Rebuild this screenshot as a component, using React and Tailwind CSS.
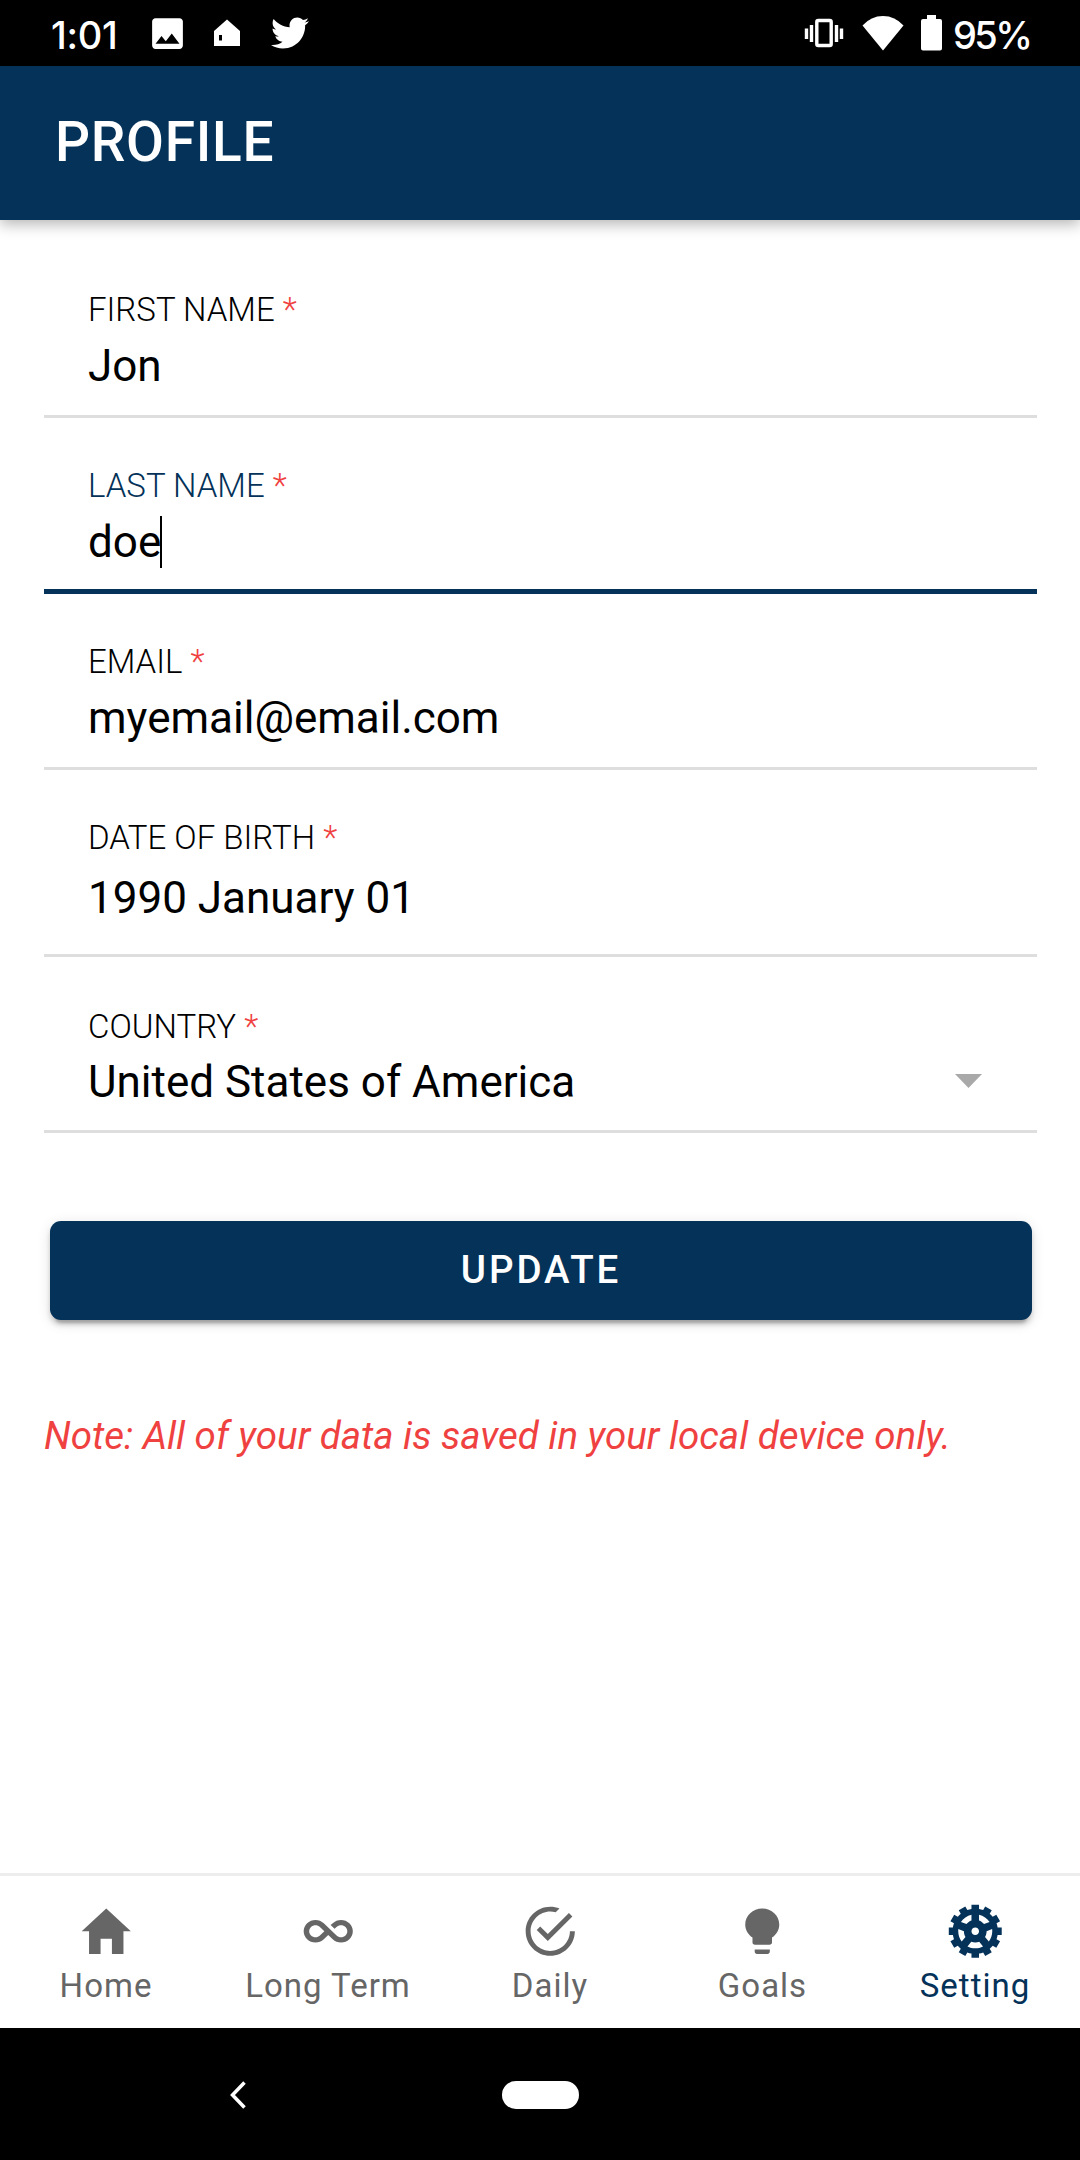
import React from "react";
import { IoMdHome, IoMdInfinite, IoMdCheckmarkCircleOutline, IoMdBulb, IoMdCog } from "react-icons/io";
import { FaTwitter } from "react-icons/fa";
import { MdImage } from "react-icons/md";

function StatusBar() {
  return (
    <div className="flex h-[66px] items-center justify-between bg-black pl-[51px] pr-[51px] text-white">
      <div className="flex items-center">
        <span className="w-[96px] font-['Inter',sans-serif] text-[38px] font-medium leading-[66px] tracking-[-0.3px] pt-[3px]">1:01</span>
        <MdImage className="h-[41px] w-[41px]" />
        <svg className="ml-[25px] h-[28px] w-[28px]" viewBox="0 0 28 28" fill="currentColor">
          <path fillRule="evenodd" d="M14 0.5 27 12V27H1V12ZM6 16V21.5H9V16Z" />
        </svg>
        <FaTwitter className="ml-[30px] h-[38px] w-[38px]" />
      </div>
      <div className="flex items-center">
        <svg className="h-[30px] w-[40px]" viewBox="0 0 40 30" fill="none" stroke="currentColor">
          <rect x="12.8" y="2.5" width="14.4" height="25" rx="1.5" strokeWidth="3.4" />
          <path d="M7.500 7V24M32.500 7V24M2.500 10.500V21M37.500 10.500V21" strokeWidth="3.4" />
        </svg>
        <svg className="ml-[18px] h-[36px] w-[42px]" viewBox="0 0 42 36" fill="currentColor">
          <path d="M0.5 10.5Q9 1 21 1T41.500 10.500L21 35.500Z" />
        </svg>
        <svg className="ml-[17px] h-[36px] w-[21px]" viewBox="0 0 21 36" fill="currentColor">
          <path d="M6 0H15V4H19Q21 4 21 6V33.500Q21 35.500 19 35.500H2Q0 35.500 0 33.500V6Q0 4 2 4H6Z" />
        </svg>
        <span className="ml-[11px] w-[76px] whitespace-nowrap font-['Inter',sans-serif] text-[38px] font-medium leading-[66px] tracking-[-2.6px] pt-[3px]">95%</span>
      </div>
    </div>
  );
}

function Field({ label, value, focused = false, boxClass = "h-[176px] pt-[48px]", valueClass = "mt-[10px]", children }) {
  return (
    <div className={(focused ? "border-b-[5px] border-[#043259] " : "border-b-[3px] border-[#dedede] ") + "mx-[44px] w-[993px] px-[44px] " + boxClass}>
      <div className={(focused ? "text-[#043259] " : "text-black ") + "h-[40px] text-[33px] font-light leading-[40px]"}>
        {label} <span className="text-[#f04141]">*</span>
      </div>
      <div className={"flex h-[52px] items-center text-[44px] leading-[52px] text-black " + valueClass}>
        <span>{value}</span>
        {focused && <span className="-ml-px h-[52px] w-[2px] bg-black" />}
        {children}
      </div>
    </div>
  );
}

const tabs = [
  { name: "Home", Icon: IoMdHome, width: "w-[212px]" },
  { name: "Long Term", Icon: IoMdInfinite, width: "w-[232px]" },
  { name: "Daily", Icon: IoMdCheckmarkCircleOutline, width: "w-[212px]" },
  { name: "Goals", Icon: IoMdBulb, width: "w-[212px] pl-px" },
  { name: "Setting", Icon: IoMdCog, width: "w-[212px] pl-[2px]", active: true },
];

export default function App() {
  return (
    <div className="flex h-[2160px] w-[1080px] flex-col overflow-hidden bg-white font-['Roboto',sans-serif]">
      <StatusBar />
      <header className="z-10 flex h-[154px] items-center bg-[#043259] pb-[2px] pl-[55px] shadow-[0_4px_14px_rgba(0,0,0,0.3)]">
        <h1 className="text-[55px] font-medium leading-[64px] tracking-[0.7px] text-white">PROFILE</h1>
      </header>
      <main className="flex-1 pt-[22px]">
        <Field label="FIRST NAME" value="Jon" />
        <Field label="LAST NAME" value="doe" focused />
        <Field label="EMAIL" value="myemail@email.com" />
        <Field label="DATE OF BIRTH" value="1990 January 01" boxClass="h-[187px] pt-[48px]" valueClass="mt-[14px]" />
        <Field label="COUNTRY" value="United States of America" boxClass="h-[176px] pt-[50px]" valueClass="mt-[9px]">
          <svg className="mb-[2px] ml-auto mr-[11px] h-[14px] w-[27px]" viewBox="0 0 27 14" fill="#a9a9a9">
            <path d="M0 0H27L13.500 14Z" />
          </svg>
        </Field>
        <button className="ml-[50px] mt-[88px] flex h-[99px] w-[982px] items-center justify-center rounded-[11px] bg-[#043259] pb-[2px] text-[38.5px] font-medium tracking-[2.9px] text-white shadow-[0_8px_3px_-5px_rgba(0,0,0,0.2),0_5px_5px_rgba(0,0,0,0.14),0_3px_14px_rgba(0,0,0,0.12)]">
          UPDATE
        </button>
        <p className="ml-[44px] mt-[93px] text-[38.5px] italic leading-[46px] text-[#f04141]">
          Note: All of your data is saved in your local device only.
        </p>
      </main>
      <nav className="flex h-[155px] border-t-[3px] border-[#ededed] bg-white">
        {tabs.map(({ name, Icon, width, active }) => (
          <div key={name} className={(active ? "text-[#043259] " : "text-[#666666] ") + "flex flex-col items-center pt-[25px] " + width}>
            <Icon className="h-[60.5px] w-[60.5px]" />
            <span className="mt-[4px] text-[33px] leading-[40px] tracking-[1px]">{name}</span>
          </div>
        ))}
      </nav>
      <div className="grid h-[132px] grid-cols-[480px_120px_480px] items-center bg-black pt-px text-white">
        <svg className="ml-[230px] h-[28px] w-[17px]" viewBox="0 0 17 28" fill="none" stroke="currentColor" strokeWidth="3.5">
          <path d="M14.500 1.500 2.500 14 14.500 26.500" />
        </svg>
        <div className="mx-auto h-[28px] w-[77px] rounded-full bg-white" />
      </div>
    </div>
  );
}
